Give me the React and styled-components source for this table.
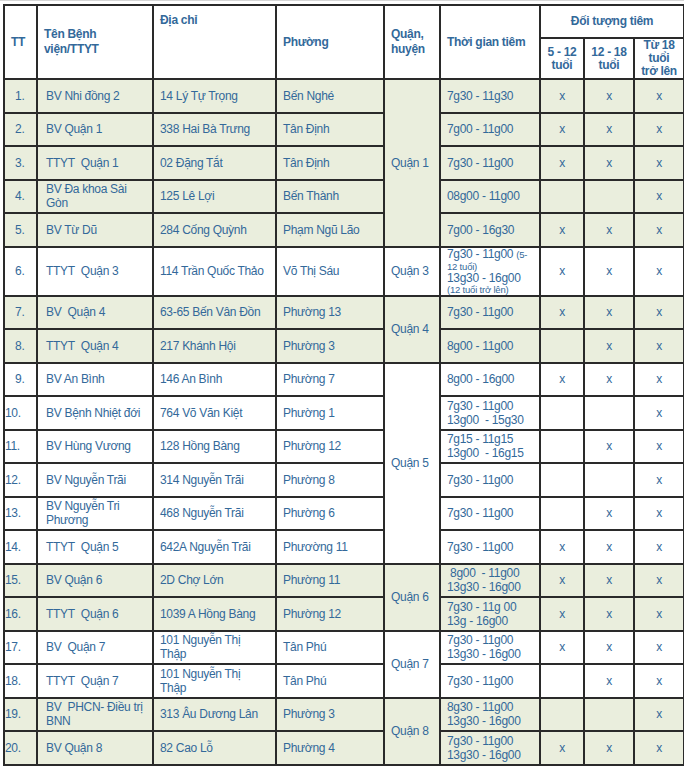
import styled, { createGlobalStyle } from 'styled-components';

const GlobalStyle = createGlobalStyle`
  html, body {
    margin: 0;
    padding: 0;
    background: #ffffff;
  }
  body {
    font-family: "Liberation Sans", Arial, sans-serif;
  }
`;

// ── Data ──────────────────────────────────────────────────────
const S = '\u00a0';

const groups = [
  {
    district: 'Quận 1',
    green: true,
    rows: [
      { name: ['BV Nhi đồng 2'], addr: ['14 Lý Tự Trọng'], ward: 'Bến Nghé', time: ['7g30 - 11g30'], x: [1, 1, 1] },
      { name: ['BV Quận 1'], addr: ['338 Hai Bà Trưng'], ward: 'Tân Định', time: ['7g00 - 11g00'], x: [1, 1, 1] },
      { name: [`TTYT${S} Quận 1`], addr: ['02 Đặng Tắt'], ward: 'Tân Định', time: ['7g30 - 11g00'], x: [1, 1, 1] },
      { name: ['BV Đa khoa Sài', 'Gòn'], addr: ['125 Lê Lợi'], ward: 'Bến Thành', time: ['08g00 - 11g00'], x: [0, 0, 1] },
      { name: ['BV Từ Dũ'], addr: ['284 Cống Quỳnh'], ward: 'Phạm Ngũ Lão', time: ['7g00 - 16g30'], x: [1, 1, 1] },
    ],
  },
  {
    district: 'Quận 3',
    green: false,
    rows: [
      { name: [`TTYT${S} Quận 3`], addr: ['114 Trần Quốc Thảo'], ward: 'Võ Thị Sáu', time: 'special', x: [1, 1, 1], tall: true },
    ],
  },
  {
    district: 'Quận 4',
    green: true,
    rows: [
      { name: [`BV${S} Quận 4`], addr: ['63-65 Bến Vân Đồn'], ward: 'Phường 13', time: ['7g30 - 11g00'], x: [1, 1, 1] },
      { name: [`TTYT${S} Quận 4`], addr: ['217 Khánh Hội'], ward: 'Phường 3', time: ['8g00 - 11g00'], x: [0, 1, 1] },
    ],
  },
  {
    district: 'Quận 5',
    green: false,
    rows: [
      { name: ['BV An Bình'], addr: ['146 An Bình'], ward: 'Phường 7', time: ['8g00 - 16g00'], x: [1, 1, 1] },
      { name: ['BV Bệnh Nhiệt đới'], addr: ['764 Võ Văn Kiệt'], ward: 'Phường 1', time: ['7g30 - 11g00', `13g00${S} - 15g30`], x: [0, 0, 1] },
      { name: ['BV Hùng Vương'], addr: ['128 Hồng Bàng'], ward: 'Phường 12', time: ['7g15 - 11g15', `13g00${S} - 16g15`], x: [0, 1, 1] },
      { name: ['BV Nguyễn Trãi'], addr: ['314 Nguyễn Trãi'], ward: 'Phường 8', time: ['7g30 - 11g00'], x: [0, 0, 1] },
      { name: ['BV Nguyễn Tri', 'Phương'], addr: ['468 Nguyễn Trãi'], ward: 'Phường 6', time: ['7g30 - 11g00'], x: [0, 1, 1] },
      { name: [`TTYT${S} Quận 5`], addr: ['642A Nguyễn Trãi'], ward: 'Phươờng 11', time: ['7g30 - 11g00'], x: [1, 1, 1] },
    ],
  },
  {
    district: 'Quận 6',
    green: true,
    rows: [
      { name: ['BV Quận 6'], addr: ['2D Chợ Lớn'], ward: 'Phường 11', time: [`${S}8g00${S} - 11g00`, '13g30 - 16g00'], x: [1, 1, 1] },
      { name: [`TTYT${S} Quận 6`], addr: ['1039 A Hồng Bàng'], ward: 'Phường 12', time: ['7g30 - 11g 00', '13g - 16g00'], x: [1, 1, 1] },
    ],
  },
  {
    district: 'Quận 7',
    green: false,
    rows: [
      { name: [`BV${S} Quận 7`], addr: ['101 Nguyễn Thị', 'Thập'], ward: 'Tân Phú', time: ['7g30 - 11g00', '13g30 - 16g00'], x: [1, 1, 1] },
      { name: [`TTYT${S} Quận 7`], addr: ['101 Nguyễn Thị', 'Thập'], ward: 'Tân Phú', time: ['7g30 - 11g00'], x: [0, 1, 1] },
    ],
  },
  {
    district: 'Quận 8',
    green: true,
    rows: [
      { name: [`BV${S} PHCN- Điều trị`, 'BNN'], addr: ['313 Âu Dương Lân'], ward: 'Phường 3', time: ['8g30 - 11g00', '13g30 - 16g00'], x: [0, 0, 1] },
      { name: ['BV Quận 8'], addr: ['82 Cao Lỗ'], ward: 'Phường 4', time: ['7g30 - 11g00', '13g30 - 16g00'], x: [1, 1, 1] },
    ],
  },
];

// ── Layout ────────────────────────────────────────────────────
const Page = styled.div`
  padding: 3px 2px 4px 3px;
  border-top: 1px solid #d6d6d6;
  box-sizing: border-box;
  width: 684px;
`;

const Table = styled.table`
  width: 680px;
  table-layout: fixed;
  border-collapse: collapse;
  border: 2px solid #2a2a2a;
  color: #33699a;
  font-size: 12px;
  letter-spacing: -0.3px;
  line-height: 14px;
`;

const HeadRow = styled.tr`
  height: ${({ $h }) => $h}px;
`;

const Th = styled.th`
  border: 2px solid #2a2a2a;
  padding: ${({ $top }) => ($top ? '7px 6px 0' : '0 6px')};
  font-weight: bold;
  line-height: ${({ $tight }) => ($tight ? 13 : 15)}px;
  text-align: ${({ $center }) => ($center ? 'center' : 'left')};
  vertical-align: ${({ $top }) => ($top ? 'top' : 'middle')};
  background: #ffffff;
`;

const Row = styled.tr`
  height: ${({ $tall }) => ($tall ? 49 : 33.5)}px;
  background: ${({ $green }) => ($green ? '#eaeedd' : '#ffffff')};
`;

const Td = styled.td`
  border: 2px solid #2a2a2a;
  padding: 0 ${({ $pad }) => $pad ?? 6}px;
  text-align: ${({ $center }) => ($center ? 'center' : 'left')};
  vertical-align: middle;
  white-space: nowrap;
`;

const Num = styled(Td)`
  padding: 0 0 0 ${({ $wide }) => ($wide ? 0 : 10)}px;
`;

const TimeLine = styled.div`
  line-height: ${({ $small }) => ($small ? 11 : 12)}px;
  font-size: ${({ $small }) => ($small ? 9.5 : 12)}px;
  letter-spacing: ${({ $small }) => ($small ? -0.2 : -0.3)}px;
`;

const Note = styled.span`
  font-size: 9.5px;
  letter-spacing: -0.2px;
`;

const Lines = ({ items }) =>
  items.map((t, i) => (
    <span key={i}>
      {i > 0 && <br />}
      {t}
    </span>
  ));

const SpecialTime = () => (
  <>
    <TimeLine>
      7g30 - 11g00 <Note>(5-</Note>
    </TimeLine>
    <TimeLine $small>12 tuổi)</TimeLine>
    <TimeLine>13g30 - 16g00</TimeLine>
    <TimeLine $small>(12 tuổi trở lên)</TimeLine>
  </>
);

// ── App ───────────────────────────────────────────────────────
export default function App() {
  let n = 0;

  return (
    <>
      <GlobalStyle />
      <Page>
        <Table>
          <colgroup>
            <col style={{ width: 33 }} />
            <col style={{ width: 116 }} />
            <col style={{ width: 123 }} />
            <col style={{ width: 108 }} />
            <col style={{ width: 56 }} />
            <col style={{ width: 100 }} />
            <col style={{ width: 44 }} />
            <col style={{ width: 50 }} />
            <col style={{ width: 50 }} />
          </colgroup>
          <thead>
            <HeadRow $h={33}>
              <Th rowSpan={2}>TT</Th>
              <Th rowSpan={2}>
                Tên Bệnh
                <br />
                viện/TTYT
              </Th>
              <Th rowSpan={2} $top>
                Địa chỉ
              </Th>
              <Th rowSpan={2}>Phường</Th>
              <Th rowSpan={2}>
                Quận,
                <br />
                huyện
              </Th>
              <Th rowSpan={2}>Thời gian tiêm</Th>
              <Th colSpan={3} $center>
                Đối tượng tiêm
              </Th>
            </HeadRow>
            <HeadRow $h={41}>
              <Th $center $tight>
                5 - 12
                <br />
                tuổi
              </Th>
              <Th $center $tight>
                12 - 18
                <br />
                tuổi
              </Th>
              <Th $center $tight>
                Từ 18
                <br />
                tuổi
                <br />
                trở lên
              </Th>
            </HeadRow>
          </thead>
          <tbody>
            {groups.map((g) =>
              g.rows.map((r, i) => {
                n += 1;
                return (
                  <Row key={n} $green={g.green} $tall={r.tall}>
                    <Num $wide={n >= 10}>{n}.</Num>
                    <Td $pad={8}>
                      <Lines items={r.name} />
                    </Td>
                    <Td>
                      <Lines items={r.addr} />
                    </Td>
                    <Td>{r.ward}</Td>
                    {i === 0 && <Td rowSpan={g.rows.length}>{g.district}</Td>}
                    <Td>{r.time === 'special' ? <SpecialTime /> : <Lines items={r.time} />}</Td>
                    {r.x.map((v, k) => (
                      <Td key={k} $center>
                        {v ? 'x' : ''}
                      </Td>
                    ))}
                  </Row>
                );
              })
            )}
          </tbody>
        </Table>
      </Page>
    </>
  );
}
